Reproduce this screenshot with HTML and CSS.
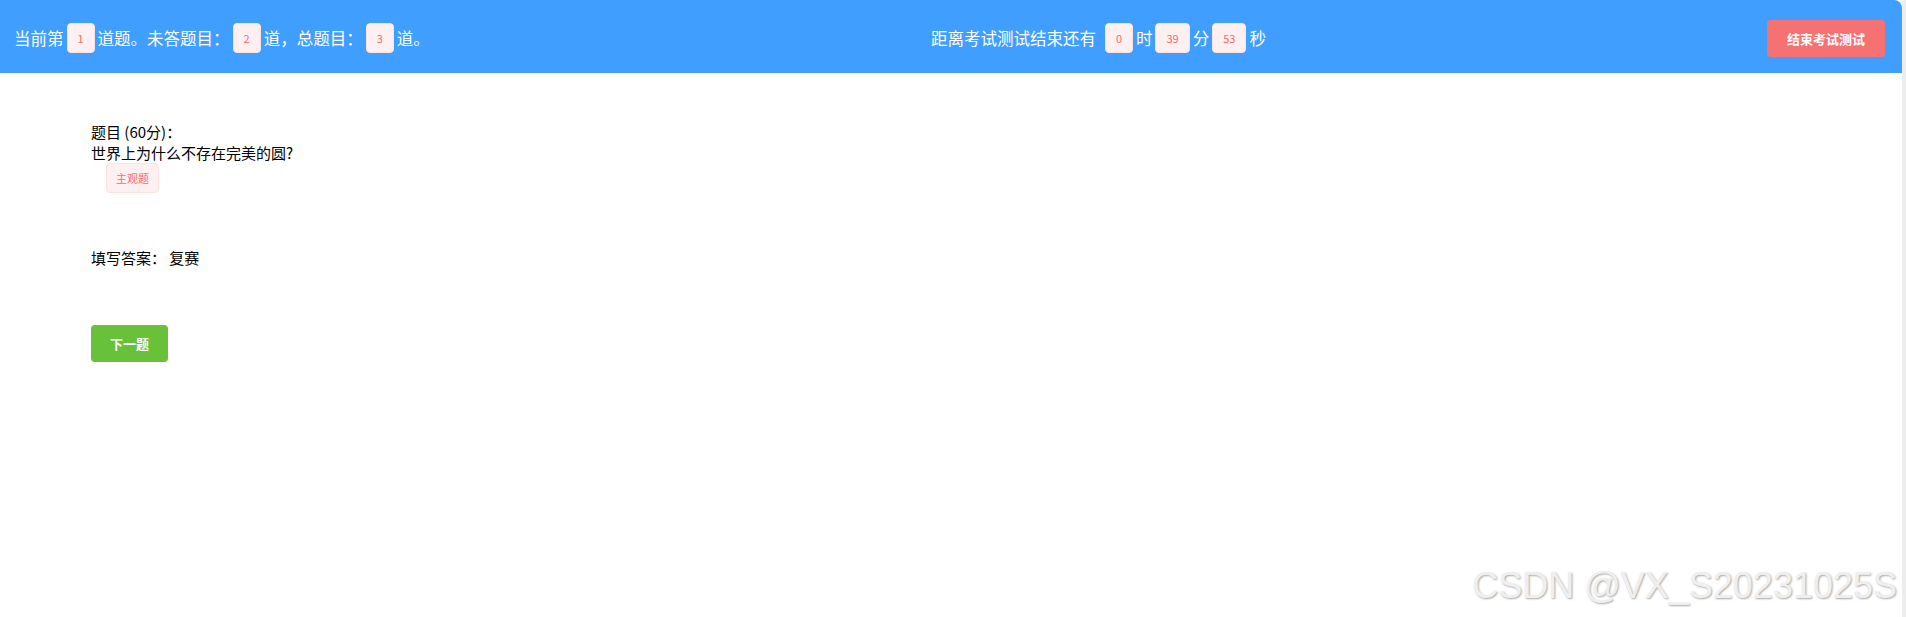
FILE: index.html
```html
<!DOCTYPE html>
<html lang="zh-CN">
<head>
<meta charset="utf-8">
<title>考试</title>
<link rel="stylesheet" href="styles.css">
</head>
<body>
<div class="page">
  <div class="app">
    <header class="topbar">
      <div class="group">
        <span>当前第</span><span class="badge">1</span><span>道题。未答题目：</span><span class="badge">2</span><span>道，总题目：</span><span class="badge">3</span><span>道。</span>
      </div>
      <div class="group">
        <span>距离考试测试结束还有</span><span class="badge badge-first">0</span><span>时</span><span class="badge">39</span><span>分</span><span class="badge">53</span><span>秒</span>
      </div>
      <button class="btn btn-danger">结束考试测试</button>
    </header>
    <main class="content">
      <div class="question">
        <div class="line">题目 (60分)：</div>
        <div class="line">世界上为什么不存在完美的圆?</div>
        <span class="tag">主观题</span>
      </div>
      <div class="answer">填写答案：&nbsp;复赛</div>
      <button class="btn btn-success">下一题</button>
    </main>
  </div>
  <div class="edge"></div>
</div>
<div class="watermark">CSDN @VX_S20231025S</div>
</body>
</html>
```

FILE: styles.css
```css
html, body {
  margin: 0;
  padding: 0;
  background: #ffffff;
}
body {
  font-family: "Noto Sans CJK SC", "Noto Sans", sans-serif;
  color: #000000;
  height: 617px;
  overflow: hidden;
}
.page {
  display: flex;
  height: 617px;
}
.app {
  flex: 1;
  min-width: 0;
}
.edge {
  width: 4px;
  background: #ededed;
}
.topbar {
  height: 73px;
  box-sizing: border-box;
  padding: 3px 17px 0 14px;
  background: #409eff;
  border-top-right-radius: 8px;
  display: flex;
  align-items: center;
  justify-content: space-between;
  color: #ffffff;
  font-size: 16.5px;
}
.group {
  display: flex;
  align-items: center;
  white-space: nowrap;
}
.badge {
  display: inline-flex;
  align-items: center;
  justify-content: center;
  height: 30px;
  box-sizing: border-box;
  padding: 0 10px;
  margin: 0 3px;
  background: #fef0f0;
  border: 1px solid #fde2e2;
  border-radius: 4px;
  color: #f56c6c;
  font-size: 11px;
}
.badge-first {
  margin-left: 9px;
}
.btn {
  font-family: inherit;
  border: none;
  border-radius: 4px;
  color: #ffffff;
  font-size: 13px;
  font-weight: 700;
  height: 37px;
  padding: 0 20px;
  cursor: pointer;
}
.btn-danger {
  background: #f67171;
}
.btn-success {
  background: #67c23a;
  padding: 0 19px;
}
.content {
  padding: 48px 0 0 91px;
  font-size: 15px;
}
.line {
  line-height: 21px;
}
.tag {
  display: inline-flex;
  align-items: center;
  height: 30px;
  box-sizing: border-box;
  padding: 0 9px;
  margin-left: 15px;
  background: #fef0f0;
  border: 1px solid #fde2e2;
  border-radius: 4px;
  color: #f56c6c;
  font-size: 11px;
}
.answer {
  margin-top: 54px;
  line-height: 21px;
}
.content .btn-success {
  margin-top: 57px;
}
.watermark {
  position: absolute;
  right: 9px;
  top: 565px;
  font-family: "Liberation Sans", Arial, sans-serif;
  font-size: 36px;
  color: #efefef;
  text-shadow: 1px 1px 2px #a8a8a8;
  white-space: nowrap;
}
```
